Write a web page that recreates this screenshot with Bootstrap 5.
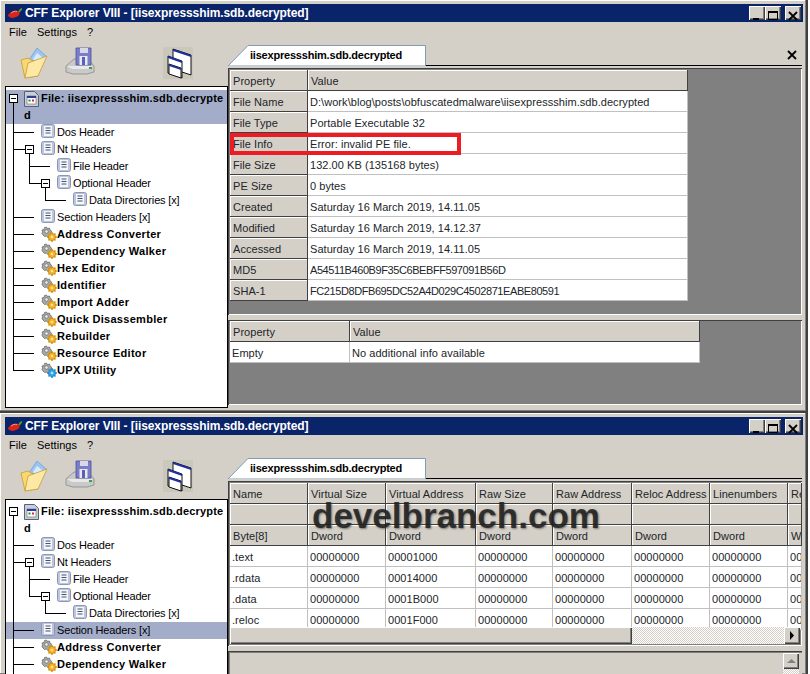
<!DOCTYPE html>
<html lang="en">
<head>
  <meta charset="UTF-8" />
  <meta name="viewport" content="width=device-width, initial-scale=1" />
  <title>CFF Explorer VIII</title>
  <link href="https://cdn.jsdelivr.net/npm/bootstrap@5.3.0/dist/css/bootstrap.min.css" rel="stylesheet" />
  <style>
    html, body { height: 674px; overflow: hidden; }
    body { background: #fff; color: #000; font: 11px/17px "Liberation Sans", Arial, sans-serif; }
    .cff-win {
      width: 808px; height: 413px; flex: none; position: relative; background: #d4d0c8;
      padding: 4px 3px 3px 5px;
      border-right: 2px solid #404040; border-bottom: 2px solid #404040;
      box-shadow: inset -1px -1px 0 #808080, inset 1px 1px 0 #fff;
    }
    .win-clip { height: 261px; overflow: hidden; border-bottom: 0; }
    .cff-title { height: 18px; flex: none; background: #0a246a; color: #fff; font-weight: 700; font-size: 12px; line-height: 18px; padding-left: 2px; letter-spacing: -.08px; }
    .pepper-ic { margin-right: 2px; }
    .cap-btn { width: 16px; height: 14px; background: #d4d0c8; box-shadow: inset 1px 1px 0 #fff, inset -1px -1px 0 #404040, inset -2px -2px 0 #808080; }
    .cap-btns { margin-right: 2px; }
    .cff-menu { height: 21px; flex: none; line-height: 21px; padding-left: 4px; gap: 10px; letter-spacing: .05px; }
    .cff-left { width: 223px; flex: none; }
    .cff-tools { height: 43px; padding: 4px 0 0 15px; }
    .tool-gap1 { margin-left: 17px; }
    .tool-gap2 { margin-left: 68px; }
    .cff-tree { height: 322px; background: #fff; border: 1px solid #000; padding-top: 3px; position: relative; overflow: hidden; }
    .tree-lines { position: absolute; left: 0; top: 0; width: 221px; height: 320px; pointer-events: none; }
    .tree-row { height: 17px; line-height: 17px; white-space: nowrap; letter-spacing: -.15px; }
    .tree-row svg { flex: none; margin-right: 2px; }
    .tree-head { height: 34px; font-weight: 700; letter-spacing: .17px; padding-left: 18px; white-space: nowrap; overflow: hidden; }
    .tree-head svg { float: left; margin: 1px 2px 0 0; }
    .tree-head span { display: block; line-height: 17px; }
    .lv1 { padding-left: 35px; }
    .lv2 { padding-left: 51px; }
    .lv3 { padding-left: 67px; }
    .tool-row { font-weight: 700; letter-spacing: .3px; }
    .tree-row.tool-row svg { margin-right: 0; }
    .tree-sel { background: #a3adca; }
    .cff-right { width: 575px; flex: none; padding: 2px 1px 0 0; }
    .tab-strip { height: 21px; position: relative; }
    .tab-shape { position: absolute; left: 0; top: 0; }
    .tab-label { width: 198px; height: 21px; position: relative; left: -1px; font-weight: 700; text-align: center; line-height: 20px; letter-spacing: -.2px; }
    .tab-fill { height: 21px; border-bottom: 1px solid #000; }
    .tab-x { position: absolute; right: 2px; top: 3px; line-height: 0; }
    .grid-panel { background: #808080; margin-top: 2px; padding: 2px; box-shadow: inset 1px 1px 0 #404040, inset -1px -1px 0 #fff; overflow: hidden; position: relative; }
    .panel-a { height: 247px; }
    .panel-b { height: 85px; margin-top: 5px; padding: 1px 1px 1px 2px; }
    .panel-c { height: 165px; }
    .cff-grid { table-layout: fixed; border-collapse: separate; border-spacing: 0; margin: 0; max-width: none; }
    .grid-a { width: 458px; }
    .grid-b { width: 470px; }
    .grid-c { width: 572px; }
    .cff-grid td { height: 21px; padding: 2px 2px 0; background: #fff; border: 0; border-right: 1px solid #c0c0c0; border-bottom: 1px solid #c0c0c0; white-space: nowrap; overflow: hidden; vertical-align: middle; line-height: 18px; letter-spacing: .05px; }
    .cff-grid td.cell-h { padding-left: 3px; background: #d4d0c8; border-right: 1px solid #404040; border-bottom: 1px solid #404040; box-shadow: inset 1px 1px 0 #fff; }
    .cff-grid td.hash-val { letter-spacing: -.42px; }
    .w77 { width: 77px; }
    .w78 { width: 78px; }
    .w79 { width: 79px; }
    .w90 { width: 90px; }
    .w380 { width: 380px; }
    .w120 { width: 120px; }
    .w350 { width: 350px; }
    .w14 { width: 14px; }
    .red-mark { position: absolute; left: 2px; top: 65px; width: 231px; height: 22px; border: 4px solid #ed1c24; }
    .water-mark { position: absolute; left: 84px; top: 15px; font: 700 35px/40px "Liberation Sans", Arial, sans-serif; color: rgba(30, 30, 30, .85); text-shadow: 1px 1px 2px rgba(60, 60, 60, .6); white-space: nowrap; }
    .h-scroll { position: absolute; left: 2px; right: 2px; top: 146px; height: 17px; display: flex; background: repeating-conic-gradient(#d4d0c8 0 25%, #fff 0 50%) 0 0 / 2px 2px; }
    .sb-thumb { background: #d4d0c8; box-shadow: inset 1px 1px 0 #fff, inset -1px -1px 0 #404040, inset -2px -2px 0 #808080; }
    .thumb-h { width: 402px; }
    .sb-btn { width: 16px; height: 17px; margin-left: auto; display: flex; align-items: center; justify-content: center; }
    .panel-d { height: 40px; margin-top: 5px; position: relative; background: #d4d0c8; box-shadow: inset 1px 1px 0 #404040, inset 2px 2px 0 #808080; }
    .v-scroll { position: absolute; right: 3px; top: 2px; bottom: 0; width: 16px; background: repeating-conic-gradient(#d4d0c8 0 25%, #fff 0 50%) 0 0 / 2px 2px; }
    .sb-up { width: 16px; height: 16px; display: flex; align-items: center; justify-content: center; }
    .win-main { height: 365px; flex: none; }
  </style>
</head>
<body>
  <svg width="0" height="0" class="position-absolute">
    <defs>
      <symbol id="ic-pepper" viewBox="0 0 16 14">
        <path d="M1 10C2 6 7 4 11 5c2 .6 2 4 0 5-3 2-7 3-10 0z" fill="#d8261c"/>
        <path d="M4 7c2-1.500 4-2 6-1.500" stroke="#f59a80" fill="none"/>
        <path d="M12 6c1-2 2-3 3-3" stroke="#5a9a30" stroke-width="2" fill="none"/>
      </symbol>
      <symbol id="ic-doc" viewBox="0 0 14 14">
        <rect x=".5" y=".5" width="13" height="13" rx="2" fill="#bcc7de" stroke="#8a96b4"/>
        <rect x="3" y="2" width="8" height="10" fill="#f4f6fa"/>
        <path d="M4.500 4h5M4.500 6.500h5M4.500 9h5" stroke="#46506e"/>
      </symbol>
      <symbol id="ic-tool" viewBox="0 0 16 16">
        <path d="M1 4l2-.5.5-2 2-.5 1 1.500 2-.5.500 2 1.500 1-.5 2 1.500 3-3 3-3-3-2 .5-1.500-1.500-1-1.500.5-2z" fill="#a8a8a8" stroke="#606060" stroke-width=".7"/>
        <circle cx="5.500" cy="5.500" r="1.800" fill="#e8e8e8" stroke="#606060" stroke-width=".6"/>
        <path d="M11 6v10M6 11h10M7.500 7.500l7 7M14.500 7.500l-7 7" stroke="#e09a18" stroke-width="1.600"/>
        <circle cx="11" cy="11" r="3.600" fill="#f4b428" stroke="#c07c10" stroke-width=".7"/>
        <circle cx="11" cy="11" r="1.200" fill="#ffe49a"/>
      </symbol>
      <symbol id="ic-upx" viewBox="0 0 16 16">
        <path d="M1 4l2-.5.5-2 2-.5 1 1.500 2-.5.500 2 1.500 1-.5 2 1.500 3-3 3-3-3-2 .5-1.500-1.500-1-1.500.5-2z" fill="#a8a8a8" stroke="#606060" stroke-width=".7"/>
        <circle cx="5.500" cy="5.500" r="1.800" fill="#e8e8e8" stroke="#606060" stroke-width=".6"/>
        <path d="M11 6v10M6 11h10M7.500 7.500l7 7M14.500 7.500l-7 7" stroke="#2a90d8" stroke-width="1.600"/>
        <circle cx="11" cy="11" r="3.600" fill="#38a8e8" stroke="#1878c0" stroke-width=".7"/>
        <circle cx="11" cy="11" r="1.200" fill="#b8e4fa"/>
      </symbol>
      <symbol id="ic-file" viewBox="0 0 15 16">
        <path d="M.5.5h10l4 4v11H.5z" fill="#c8cede" stroke="#5a6070"/>
        <rect x="3" y="5" width="9" height="8" fill="#fff" stroke="#666" stroke-width=".6"/>
        <rect x="3" y="5" width="9" height="2" fill="#2a3c9a"/>
        <rect x="4.500" y="8.500" width="2" height="2" fill="#2a8a3a"/>
        <rect x="8" y="8.500" width="2" height="2" fill="#c83030"/>
      </symbol>
      <symbol id="ic-open" viewBox="0 0 28 32">
        <path d="M9 13L17 1l9 8-6 12z" fill="#9cc6f2" stroke="#6a9ed8" stroke-width=".8"/>
        <path d="M13 12l4-6 5 4-3 6z" fill="#d8eafc"/>
        <path d="M1 13l7-2 3 2 9 3-2 13-13 2z" fill="#f8d870" stroke="#c89a38" stroke-width=".8"/>
        <path d="M5 31l3-15 19-7-9 20z" fill="#fde9a4" stroke="#c89a38" stroke-width=".8"/>
      </symbol>
      <symbol id="ic-disk" viewBox="0 0 30 28">
        <path d="M1 19l8-7h14l6 7v6l-7 2H8l-7-2z" fill="#c9c9c9" stroke="#8a8a8a" stroke-width=".8"/>
        <path d="M2 19h26l-5 3H7z" fill="#e8e8e8"/>
        <rect x="24" y="20" width="3" height="2" fill="#3aa04a"/>
        <path d="M11 1h15v17H11z" fill="#7a7ec8" stroke="#4c4e98" stroke-width=".8"/>
        <rect x="15" y="1" width="8" height="5" fill="#d8d8e8"/>
        <rect x="14.500" y="9" width="8" height="9" fill="#e8e8f0"/>
        <rect x="17" y="10" width="3" height="8" fill="#5c60b8"/>
      </symbol>
      <symbol id="ic-wins" viewBox="0 0 30 32">
        <rect width="30" height="32" fill="#c9c8ba"/>
        <path d="M10 2l18 6v20l-18-6z" fill="#fff" stroke="#111"/>
        <path d="M10 2l18 6v2l-18-6z" fill="#1c2ea8"/>
        <path d="M4 10l14 5v17L4 27z" fill="#fff" stroke="#111" transform="translate(1 -1)"/>
        <path d="M5 9l14 5v2L5 11z" fill="#1c2ea8"/>
        <path d="M6 17l12 4v10L6 27z" fill="#fff" stroke="#111"/>
        <path d="M6 17l12 4v2L6 19z" fill="#1c2ea8"/>
      </symbol>
      <symbol id="ic-min" viewBox="0 0 16 14"><rect x="4" y="9" width="6" height="2" fill="#000"/></symbol>
      <symbol id="ic-max" viewBox="0 0 16 14"><path d="M3.500 2.500h9v8h-9z" fill="none" stroke="#000"/><path d="M3 2h10v2H3z" fill="#000"/></symbol>
      <symbol id="ic-x" viewBox="0 0 16 14"><path d="M4 3l8 8M12 3l-8 8" stroke="#000" stroke-width="1.800"/></symbol>
      <symbol id="tab-bg" viewBox="0 0 198 21">
        <path d="M0 21L20 .5H197.500V21z" fill="#fff" stroke="#7f9db9"/>
      </symbol>
      <symbol id="tree-conn" viewBox="0 0 221 320">
        <g stroke="#000" fill="none" shape-rendering="crispEdges">
          <rect x="3.500" y="7.500" width="8" height="8" fill="#fff"/>
          <path d="M5 11.500h5"/>
          <path d="M7.500 16V283.500M7.500 45.500H28M7.500 62.500H20M7.500 130.500H28M7.500 147.500H28M7.500 164.500H28M7.500 181.500H28M7.500 198.500H28M7.500 215.500H28M7.500 232.500H28M7.500 249.500H28M7.500 266.500H28M7.500 283.500H28"/>
          <rect x="19.500" y="58.500" width="8" height="8" fill="#fff"/>
          <path d="M21 62.500h5"/>
          <path d="M23.500 67V96.500M23.500 79.500H44M23.500 96.500H36"/>
          <rect x="35.500" y="92.500" width="8" height="8" fill="#fff"/>
          <path d="M37 96.500h5"/>
          <path d="M39.500 101V113.500H60"/>
        </g>
      </symbol>
    </defs>
  </svg>

  <div class="d-flex flex-column">
    <!-- first window -->
    <div class="cff-win d-flex flex-column">
      <div class="cff-title d-flex align-items-center">
        <svg width="16" height="14" class="pepper-ic"><use href="#ic-pepper"/></svg>
        <span>CFF Explorer VIII - [iisexpressshim.sdb.decrypted]</span>
        <div class="cap-btns ms-auto d-flex gap-0">
          <div class="cap-btn"><svg width="16" height="14"><use href="#ic-min"/></svg></div>
          <div class="cap-btn"><svg width="16" height="14"><use href="#ic-max"/></svg></div>
          <div class="cap-btn ms-1"><svg width="16" height="14"><use href="#ic-x"/></svg></div>
        </div>
      </div>
      <div class="cff-menu d-flex"><span>File</span><span>Settings</span><span>?</span></div>
      <div class="d-flex win-main">
        <div class="cff-left">
          <div class="cff-tools d-flex">
            <svg width="28" height="32"><use href="#ic-open"/></svg>
            <svg width="30" height="28" class="tool-gap1"><use href="#ic-disk"/></svg>
            <svg width="30" height="32" class="tool-gap2"><use href="#ic-wins"/></svg>
          </div>
          <div class="cff-tree">
            <div class="tree-head tree-sel"><svg width="15" height="16"><use href="#ic-file"/></svg><span>File: iisexpressshim.sdb.decrypte<br>d</span></div>
            <div class="tree-row lv1 d-flex"><svg width="14" height="14"><use href="#ic-doc"/></svg>Dos Header</div>
            <div class="tree-row lv1 d-flex"><svg width="14" height="14"><use href="#ic-doc"/></svg>Nt Headers</div>
            <div class="tree-row lv2 d-flex"><svg width="14" height="14"><use href="#ic-doc"/></svg>File Header</div>
            <div class="tree-row lv2 d-flex"><svg width="14" height="14"><use href="#ic-doc"/></svg>Optional Header</div>
            <div class="tree-row lv3 d-flex"><svg width="14" height="14"><use href="#ic-doc"/></svg>Data Directories [x]</div>
            <div class="tree-row lv1 d-flex"><svg width="14" height="14"><use href="#ic-doc"/></svg>Section Headers [x]</div>
            <div class="tree-row lv1 tool-row d-flex"><svg width="16" height="16"><use href="#ic-tool"/></svg>Address Converter</div>
            <div class="tree-row lv1 tool-row d-flex"><svg width="16" height="16"><use href="#ic-tool"/></svg>Dependency Walker</div>
            <div class="tree-row lv1 tool-row d-flex"><svg width="16" height="16"><use href="#ic-tool"/></svg>Hex Editor</div>
            <div class="tree-row lv1 tool-row d-flex"><svg width="16" height="16"><use href="#ic-tool"/></svg>Identifier</div>
            <div class="tree-row lv1 tool-row d-flex"><svg width="16" height="16"><use href="#ic-tool"/></svg>Import Adder</div>
            <div class="tree-row lv1 tool-row d-flex"><svg width="16" height="16"><use href="#ic-tool"/></svg>Quick Disassembler</div>
            <div class="tree-row lv1 tool-row d-flex"><svg width="16" height="16"><use href="#ic-tool"/></svg>Rebuilder</div>
            <div class="tree-row lv1 tool-row d-flex"><svg width="16" height="16"><use href="#ic-tool"/></svg>Resource Editor</div>
            <div class="tree-row lv1 tool-row d-flex"><svg width="16" height="16"><use href="#ic-upx"/></svg>UPX Utility</div>
            <svg class="tree-lines"><use href="#tree-conn"/></svg>
          </div>
        </div>
        <div class="cff-right">
          <div class="tab-strip d-flex">
            <svg class="tab-shape" width="198" height="21"><use href="#tab-bg"/></svg>
            <div class="tab-label">iisexpressshim.sdb.decrypted</div>
            <div class="tab-fill flex-grow-1"></div>
            <svg class="tab-x" width="16" height="14"><use href="#ic-x"/></svg>
          </div>
          <div class="grid-panel panel-a">
            <table class="table cff-grid grid-a">
              <colgroup><col class="w78"><col class="w380"></colgroup>
              <tr><td class="cell-h">Property</td><td class="cell-h">Value</td></tr>
              <tr><td class="cell-h">File Name</td><td>D:\work\blog\posts\obfuscatedmalware\iisexpressshim.sdb.decrypted</td></tr>
              <tr><td class="cell-h">File Type</td><td>Portable Executable 32</td></tr>
              <tr><td class="cell-h">File Info</td><td>Error: invalid PE file.</td></tr>
              <tr><td class="cell-h">File Size</td><td>132.00 KB (135168 bytes)</td></tr>
              <tr><td class="cell-h">PE Size</td><td>0 bytes</td></tr>
              <tr><td class="cell-h">Created</td><td>Saturday 16 March 2019, 14.11.05</td></tr>
              <tr><td class="cell-h">Modified</td><td>Saturday 16 March 2019, 14.12.37</td></tr>
              <tr><td class="cell-h">Accessed</td><td>Saturday 16 March 2019, 14.11.05</td></tr>
              <tr><td class="cell-h">MD5</td><td class="hash-val">A54511B460B9F35C6BEBFF597091B56D</td></tr>
              <tr><td class="cell-h">SHA-1</td><td class="hash-val">FC215D8DFB695DC52A4D029C4502871EABE80591</td></tr>
            </table>
            <div class="red-mark"></div>
          </div>
          <div class="grid-panel panel-b">
            <table class="table cff-grid grid-b">
              <colgroup><col class="w120"><col class="w350"></colgroup>
              <tr><td class="cell-h">Property</td><td class="cell-h">Value</td></tr>
              <tr><td>Empty</td><td>No additional info available</td></tr>
            </table>
          </div>
        </div>
      </div>
    </div>

    <!-- second window -->
    <div class="cff-win win-clip d-flex flex-column">
      <div class="cff-title d-flex align-items-center">
        <svg width="16" height="14" class="pepper-ic"><use href="#ic-pepper"/></svg>
        <span>CFF Explorer VIII - [iisexpressshim.sdb.decrypted]</span>
        <div class="cap-btns ms-auto d-flex gap-0">
          <div class="cap-btn"><svg width="16" height="14"><use href="#ic-min"/></svg></div>
          <div class="cap-btn"><svg width="16" height="14"><use href="#ic-max"/></svg></div>
          <div class="cap-btn ms-1"><svg width="16" height="14"><use href="#ic-x"/></svg></div>
        </div>
      </div>
      <div class="cff-menu d-flex"><span>File</span><span>Settings</span><span>?</span></div>
      <div class="d-flex win-main">
        <div class="cff-left">
          <div class="cff-tools d-flex">
            <svg width="28" height="32"><use href="#ic-open"/></svg>
            <svg width="30" height="28" class="tool-gap1"><use href="#ic-disk"/></svg>
            <svg width="30" height="32" class="tool-gap2"><use href="#ic-wins"/></svg>
          </div>
          <div class="cff-tree">
            <div class="tree-head"><svg width="15" height="16"><use href="#ic-file"/></svg><span>File: iisexpressshim.sdb.decrypte<br>d</span></div>
            <div class="tree-row lv1 d-flex"><svg width="14" height="14"><use href="#ic-doc"/></svg>Dos Header</div>
            <div class="tree-row lv1 d-flex"><svg width="14" height="14"><use href="#ic-doc"/></svg>Nt Headers</div>
            <div class="tree-row lv2 d-flex"><svg width="14" height="14"><use href="#ic-doc"/></svg>File Header</div>
            <div class="tree-row lv2 d-flex"><svg width="14" height="14"><use href="#ic-doc"/></svg>Optional Header</div>
            <div class="tree-row lv3 d-flex"><svg width="14" height="14"><use href="#ic-doc"/></svg>Data Directories [x]</div>
            <div class="tree-row lv1 tree-sel d-flex"><svg width="14" height="14"><use href="#ic-doc"/></svg>Section Headers [x]</div>
            <div class="tree-row lv1 tool-row d-flex"><svg width="16" height="16"><use href="#ic-tool"/></svg>Address Converter</div>
            <div class="tree-row lv1 tool-row d-flex"><svg width="16" height="16"><use href="#ic-tool"/></svg>Dependency Walker</div>
            <svg class="tree-lines"><use href="#tree-conn"/></svg>
          </div>
        </div>
        <div class="cff-right">
          <div class="tab-strip d-flex">
            <svg class="tab-shape" width="198" height="21"><use href="#tab-bg"/></svg>
            <div class="tab-label">iisexpressshim.sdb.decrypted</div>
            <div class="tab-fill flex-grow-1"></div>
          </div>
          <div class="grid-panel panel-c">
            <table class="table cff-grid grid-c">
              <colgroup><col class="w78"><col class="w78"><col class="w90"><col class="w77"><col class="w79"><col class="w78"><col class="w78"><col class="w14"></colgroup>
              <tr><td class="cell-h">Name</td><td class="cell-h">Virtual Size</td><td class="cell-h">Virtual Address</td><td class="cell-h">Raw Size</td><td class="cell-h">Raw Address</td><td class="cell-h">Reloc Address</td><td class="cell-h">Linenumbers</td><td class="cell-h">Re</td></tr>
              <tr><td class="cell-h"></td><td class="cell-h"></td><td class="cell-h"></td><td class="cell-h"></td><td class="cell-h"></td><td class="cell-h"></td><td class="cell-h"></td><td class="cell-h"></td></tr>
              <tr><td class="cell-h">Byte[8]</td><td class="cell-h">Dword</td><td class="cell-h">Dword</td><td class="cell-h">Dword</td><td class="cell-h">Dword</td><td class="cell-h">Dword</td><td class="cell-h">Dword</td><td class="cell-h">W</td></tr>
              <tr><td>.text</td><td>00000000</td><td>00001000</td><td>00000000</td><td>00000000</td><td>00000000</td><td>00000000</td><td>00</td></tr>
              <tr><td>.rdata</td><td>00000000</td><td>00014000</td><td>00000000</td><td>00000000</td><td>00000000</td><td>00000000</td><td>00</td></tr>
              <tr><td>.data</td><td>00000000</td><td>0001B000</td><td>00000000</td><td>00000000</td><td>00000000</td><td>00000000</td><td>00</td></tr>
              <tr><td>.reloc</td><td>00000000</td><td>0001F000</td><td>00000000</td><td>00000000</td><td>00000000</td><td>00000000</td><td>00</td></tr>
            </table>
            <div class="water-mark">develbranch.com</div>
            <div class="h-scroll">
              <div class="sb-thumb thumb-h"></div>
              <div class="sb-btn sb-thumb"><svg width="6" height="9"><path d="M1 0l4 4.500-4 4.500z" fill="#000"/></svg></div>
            </div>
          </div>
          <div class="panel-d">
            <div class="v-scroll"><div class="sb-up sb-thumb"><svg width="9" height="6"><path d="M4.500 1L9 5H0z" fill="#808080"/></svg></div></div>
          </div>
        </div>
      </div>
    </div>
  </div>

  <script src="https://cdn.jsdelivr.net/npm/bootstrap@5.3.0/dist/js/bootstrap.bundle.min.js"></script>
</body>
</html>
